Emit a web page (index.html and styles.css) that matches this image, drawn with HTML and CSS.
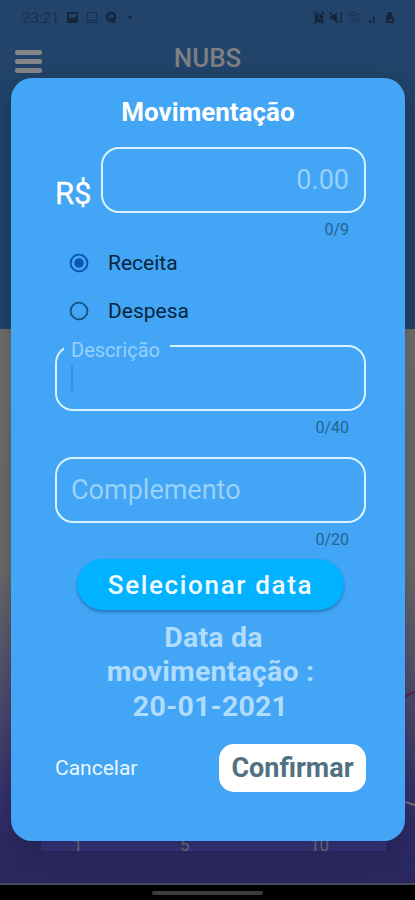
FILE: index.html
```html
<!DOCTYPE html>
<html lang="pt-BR">
<head>
<meta charset="utf-8">
<meta name="viewport" content="width=device-width">
<title>NUBS</title>
<link rel="stylesheet" href="styles.css">
</head>
<body>
<div class="screen">
  <header class="top">
    <div class="status">
      <span class="clock">23:21</span>
      <svg class="status-left" width="70" height="16" viewBox="0 0 70 16">
        <path fill-rule="evenodd" d="M3 2h11v11H3zM5 4v5l3-2 2 1 3-2V4z"/>
        <path fill="none" stroke="#17304d" d="M23.500 2.500h9v8h-9zM21 12.500h14"/>
        <circle cx="47" cy="7" r="4" fill="none" stroke="#14253c" stroke-width="2.400"/>
        <path d="M46 8l2-1 4 6h-3z"/>
        <circle cx="66" cy="7" r="1.600"/>
      </svg>
      <svg class="status-right" width="86" height="16" viewBox="0 0 86 16">
        <circle cx="8" cy="8" r="4.500"/><path d="M2 4l3-3 1 1-3 3zM14 4l-3-3-1 1 3 3zM3 12l2-1 1 2-2 1zM13 12l-2-1-1 2 2 1z"/>
        <path fill="none" stroke="#25456a" d="M8 5v3l2 1"/>
        <path d="M19 6h3l4-4v11l-4-4h-3z"/><path fill="none" stroke="#14253c" stroke-width="1.300" d="M19 2l8 11M30 2v11"/>
        <path fill="none" stroke="#17304d" d="M36 5q7-5 13 0M38 7q5-4 9 0M40 9q3-2 5 0l-2 3zM47 8v5"/>
        <path d="M58 10h2v3h-2zM62 6h1.500v7H62z"/>
        <path fill-rule="evenodd" d="M77 2h4v3h-4zM75 5h7l1 8h-8zM78 9v2h3V9z"/>
      </svg>
    </div>
    <div class="appbar">
      <div class="menu"><i></i><i></i><i></i></div>
      <h1>NUBS</h1>
    </div>
  </header>
  <main class="page">
    <svg class="curve" width="10" height="12" viewBox="0 0 10 12"><path d="M0 7Q4 3 10 2" stroke="#641f4f"/></svg>
    <svg class="curve" width="10" height="12" viewBox="0 0 10 12"><path d="M0 3L10 6" stroke="#77757a"/></svg>
    <div class="axis"><span>1</span><span>5</span><span>10</span></div>
  </main>
  <footer class="nav"><i></i></footer>

  <form class="dialog">
    <h2>Movimentação</h2>
    <div class="amount">
      <span class="currency">R$</span>
      <div class="field money"><span>0.00</span></div>
    </div>
    <div class="count">0/9</div>
    <div class="choices">
      <div class="choice"><svg width="20" height="20" viewBox="0 0 20 20"><circle cx="10" cy="10" r="8.400" fill="none" stroke="#0d52b5" stroke-width="1.900"/><circle cx="10" cy="10" r="4.700" fill="#0d52b5"/></svg><span>Receita</span></div>
      <div class="choice"><svg width="20" height="20" viewBox="0 0 20 20"><circle cx="10" cy="10" r="8.400" fill="none" stroke="#145487" stroke-width="1.900"/></svg><span>Despesa</span></div>
    </div>
    <div class="field description"><span class="label">Descrição</span><i class="caret"></i></div>
    <div class="count">0/40</div>
    <div class="field complement"><span>Complemento</span></div>
    <div class="count">0/20</div>
    <div class="pick">Selecionar data</div>
    <p class="date"><span class="first">Data da</span><br>movimentação :<br>20-01-2021</p>
    <div class="actions"><span class="cancel">Cancelar</span><span class="confirm">Confirmar</span></div>
  </form>
</div>
</body>
</html>
```
FILE: styles.css
```css
* { box-sizing: border-box; }
body { margin: 0; font-family: Roboto, sans-serif; }
h1, h2, p { margin: 0; }
svg, i { display: block; }
span { white-space: nowrap; }

.screen { position: relative; width: 415px; height: 900px; overflow: hidden; display: flex; flex-direction: column; }
.top { height: 329px; flex: none; background: #22446a; }
.status { display: flex; align-items: center; height: 36px; padding: 0 18px 0 22px; fill: #14253c; }
.clock { width: 42px; font-size: 15px; line-height: 36px; color: #17304d; }
.status-right { margin-left: auto; }
.appbar { display: grid; grid-template-columns: 42px 1fr 42px; height: 46px; }
.menu { display: flex; flex-direction: column; gap: 4px; padding: 14px 0 0 15px; }
.menu i { width: 27px; height: 5px; border-radius: 2px; background: #858487; }
.appbar h1 { text-align: center; font-size: 26px; font-weight: 500; line-height: 45px; color: #7d7f85; }

.page { flex: 1; display: flex; flex-direction: column; background: linear-gradient(#706f6b 0, #6e6d6b 42%, #504e6d 65%, #35336b 84%, #2b2961 95%, #29275e 100%); border-bottom: 2px solid #484859; }
.curve { align-self: flex-end; margin-top: 361px; fill: none; stroke-width: 2; }
.curve + .curve { margin-top: 97px; }
.axis { display: grid; grid-template-columns: 85px 132px 1fr; margin: 19px 29px 0 41px; height: 21px; background: #383778; color: #76747f; font-size: 17px; line-height: 31px; }
.axis span { padding-left: 32px; }
.axis span:nth-child(2) { padding-left: 54px; }
.axis span:nth-child(3) { padding-left: 52px; }
.nav { height: 15px; flex: none; background: #000; padding-top: 6px; }
.nav i { width: 111px; height: 4px; margin: 0 auto; border-radius: 2px; background: #3c3c3a; }

.dialog { position: absolute; left: 11px; top: 78px; width: 394px; height: 763px; padding: 17px 39px 0 44px; border-radius: 21px; background: #42a5f5; box-shadow: 0 8px 24px rgba(0, 0, 40, .28); display: flex; flex-direction: column; }
h2 { text-align: center; margin-right: 5px; font-size: 26px; font-weight: 700; line-height: 34px; color: #fff; }
.amount { display: flex; justify-content: space-between; margin-top: 18px; }
.currency { padding-top: 30px; font-size: 31px; line-height: 34px; color: #fff; -webkit-text-stroke: .3px #fff; }
.field { height: 66px; flex: none; border: 2px solid #d9f2ff; border-radius: 18px; padding: 0 15px; font-size: 27px; line-height: 63px; color: #98d1fb; }
.money { width: 265px; text-align: right; }
.count { height: 20px; line-height: 20px; margin-top: 7px; padding-right: 17px; text-align: right; font-size: 16px; color: #25638e; }
.choices { display: flex; flex-direction: column; margin: -1px 0 10px 14px; }
.choice { display: flex; align-items: center; gap: 19px; height: 48px; font-size: 21px; line-height: 24px; color: #08253d; }
.description { position: relative; }
.label { position: absolute; left: 7px; top: -11px; width: 106px; padding-left: 7px; background: #42a5f5; font-size: 20px; line-height: 28px; }
.caret { width: 2px; height: 28px; margin-left: -1px; margin-top: 16px; background: #3b91e6; }
.complement { margin-top: 19px; }
.complement span { margin-left: -1px; }
.pick { flex: none; width: 267px; height: 51px; margin: 9px 0 0 22px; border-radius: 26px; background: #00b2ff; box-shadow: 0 2px 3px rgba(10, 60, 120, .45); text-align: center; font-size: 26px; font-weight: 500; line-height: 52px; letter-spacing: 1.65px; color: #f1fbff; }
.date { margin-top: 11px; text-align: center; font-size: 28.5px; font-weight: 700; line-height: 34.3px; letter-spacing: .2px; color: #b0dcfd; }
.first { padding-left: 6px; }
.actions { display: flex; justify-content: space-between; align-items: center; margin-top: 20px; }
.cancel { font-size: 21px; color: #eaf7ff; }
.confirm { width: 147px; height: 48px; border-radius: 15px; background: #fff; text-align: center; font-size: 27px; font-weight: 700; line-height: 49px; color: #4f7182; }
```
